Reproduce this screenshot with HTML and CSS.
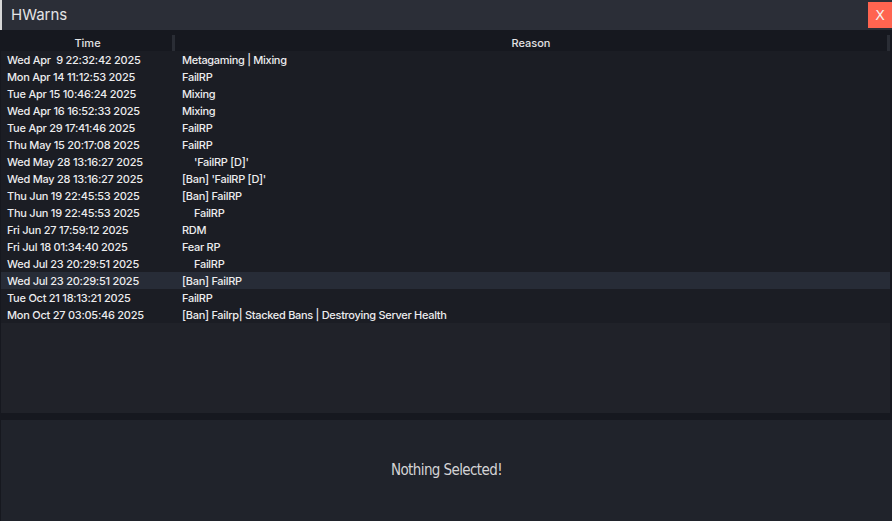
FILE: index.html
```html
<!DOCTYPE html>
<html>
<head>
<meta charset="utf-8">
<link rel="stylesheet" href="styles.css">
</head>
<body>
<div class="window">
  <div class="titlebar">
    <span class="title">HWarns</span>
    <button class="close">X</button>
  </div>
  <div class="list">
    <div class="head">
      <div class="hcell time">Time</div>
      <div class="sep"></div>
      <div class="hcell reason">Reason</div>
      <div class="sep"></div>
    </div>
    <div class="rows">
      <div class="row"><span class="c1">Wed Apr  9 22:32:42 2025</span><span class="c2">Metagaming | Mixing</span></div>
      <div class="row"><span class="c1">Mon Apr 14 11:12:53 2025</span><span class="c2">FailRP</span></div>
      <div class="row"><span class="c1">Tue Apr 15 10:46:24 2025</span><span class="c2">Mixing</span></div>
      <div class="row"><span class="c1">Wed Apr 16 16:52:33 2025</span><span class="c2">Mixing</span></div>
      <div class="row"><span class="c1">Tue Apr 29 17:41:46 2025</span><span class="c2">FailRP</span></div>
      <div class="row"><span class="c1">Thu May 15 20:17:08 2025</span><span class="c2">FailRP</span></div>
      <div class="row"><span class="c1">Wed May 28 13:16:27 2025</span><span class="c2 ind">'FailRP [D]'</span></div>
      <div class="row"><span class="c1">Wed May 28 13:16:27 2025</span><span class="c2">[Ban] 'FailRP [D]'</span></div>
      <div class="row"><span class="c1">Thu Jun 19 22:45:53 2025</span><span class="c2">[Ban] FailRP</span></div>
      <div class="row"><span class="c1">Thu Jun 19 22:45:53 2025</span><span class="c2 ind">FailRP</span></div>
      <div class="row"><span class="c1">Fri Jun 27 17:59:12 2025</span><span class="c2">RDM</span></div>
      <div class="row"><span class="c1">Fri Jul 18 01:34:40 2025</span><span class="c2">Fear RP</span></div>
      <div class="row"><span class="c1">Wed Jul 23 20:29:51 2025</span><span class="c2 ind">FailRP</span></div>
      <div class="row selected"><span class="c1">Wed Jul 23 20:29:51 2025</span><span class="c2">[Ban] FailRP</span></div>
      <div class="row"><span class="c1">Tue Oct 21 18:13:21 2025</span><span class="c2">FailRP</span></div>
      <div class="row"><span class="c1">Mon Oct 27 03:05:46 2025</span><span class="c2">[Ban] Failrp| Stacked Bans | Destroying Server Health</span></div>
    </div>
  </div>
  <div class="detail">Nothing Selected!</div>
</div>
</body>
</html>
```

FILE: styles.css
```css
html, body {
  margin: 0;
  padding: 0;
  background: #16181f;
}
.window {
  width: 892px;
  height: 521px;
  display: flex;
  flex-direction: column;
  background: #16181f;
  font-family: Inter, "Noto Sans", sans-serif;
  overflow: hidden;
}
.titlebar {
  height: 30px;
  flex: none;
  display: flex;
  align-items: center;
  justify-content: space-between;
  background: #2b2e37;
  border-left: 2px solid #d8d8d8;
  box-sizing: border-box;
}
.title {
  color: #e4e4e6;
  font-size: 15px;
  padding-left: 9px;
  padding-bottom: 1px;
}
.close {
  width: 24px;
  height: 26px;
  border: none;
  margin: 0;
  padding: 0;
  background: #ff6450;
  color: #f6f0ee;
  font-family: "DejaVu Sans", sans-serif;
  font-size: 14px;
  align-self: center;
}
.list {
  height: 383px;
  flex: none;
  display: flex;
  flex-direction: column;
  background: #202229;
  border-right: 2px solid #16181f;
  border-left: 1px solid #16181f;
  box-sizing: border-box;
}
.head {
  height: 21px;
  flex: none;
  display: flex;
  align-items: flex-end;
  background: #16181f;
  margin-left: -1px;
}
.hcell {
  height: 21px;
  line-height: 26px;
  color: #e2e2e4;
  font-size: 11px;
  font-weight: 500;
  text-align: center;
}
.time { width: 172px; padding-left: 3px; box-sizing: border-box; }
.reason { flex: 1; }
.sep {
  width: 3px;
  height: 16px;
  background: #2a2d35;
}
.rows {
  display: flex;
  flex-direction: column;
}
.row {
  height: 17px;
  display: flex;
  align-items: center;
  background: #1b1d24;
  color: #ececee;
  font-size: 11px;
  font-weight: 500;
  white-space: pre;
}
.row.selected { background: #272c37; }
.c1 {
  width: 175px;
  padding-left: 6px;
  box-sizing: border-box;
  letter-spacing: -0.25px;
}
.c2 {
  padding-left: 6px;
  letter-spacing: -0.3px;
}
.c2.ind { padding-left: 18px; }
.detail {
  margin-top: 7px;
  flex: 1;
  display: flex;
  align-items: center;
  justify-content: center;
  background: #20232b;
  border-left: 1px solid #16181f;
  color: #d4d4d6;
  font-family: "DejaVu Sans Condensed", "DejaVu Sans", sans-serif;
  font-size: 15px;
  letter-spacing: -0.6px;
  padding-bottom: 1px;
}
```
